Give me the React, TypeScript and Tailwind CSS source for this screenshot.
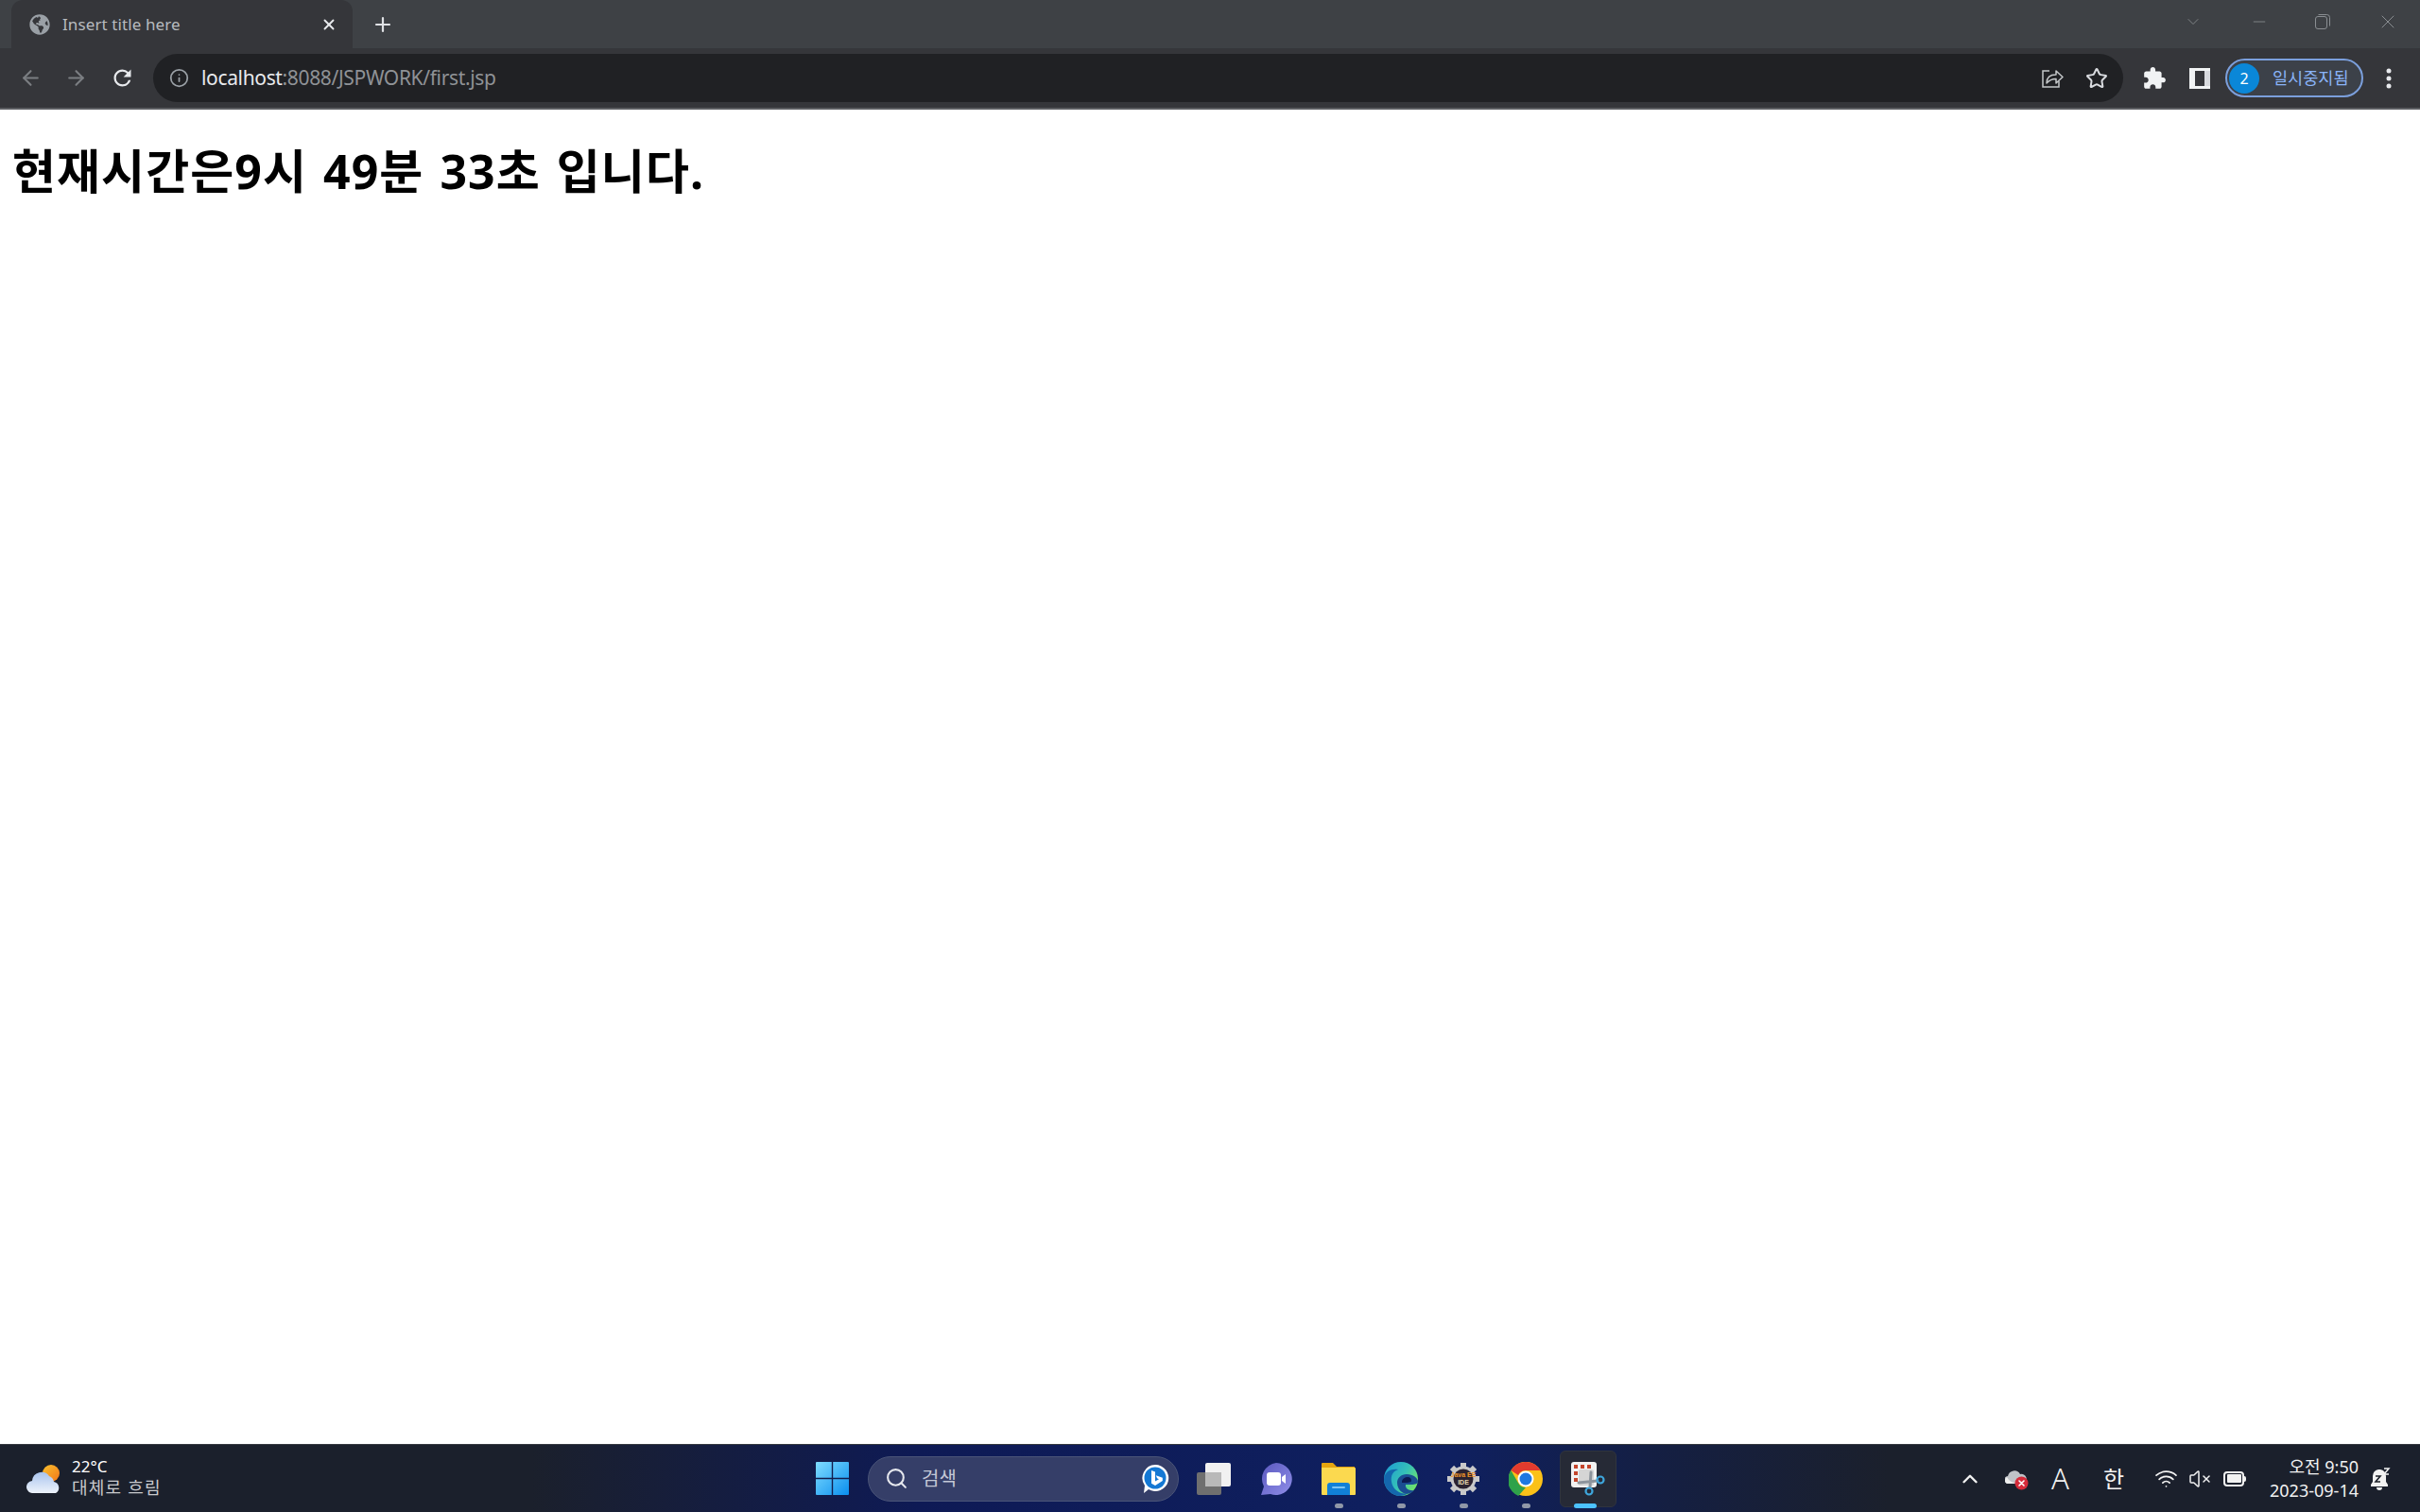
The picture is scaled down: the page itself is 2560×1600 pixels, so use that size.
import type { ReactNode } from 'react';
import { ArrowLeft, ArrowRight, ChevronDown, ChevronUp, Info, Minus, Plus, Search, Star, VolumeX, Wifi, X } from 'lucide-react';
import { FaGlobeAmericas } from 'react-icons/fa';

const KR = 'font-["Noto_Sans","Noto_Sans_CJK_KR",sans-serif]';

function Slot({ children, dot, active }: { children: ReactNode; dot?: boolean; active?: boolean }) {
  return (
    <div className="relative flex h-[60px] w-[66px] items-center justify-center">
      {active && <div className="absolute inset-x-[3px] inset-y-0 rounded-md border border-[#30343e] bg-[#262a36]" />}
      <div className="relative">{children}</div>
      {dot && <div className="absolute bottom-[-1px] left-[29px] h-[5px] w-[9px] rounded-full bg-[#9098a8]" />}
      {active && <div className="absolute bottom-[-1px] left-[18px] h-[5px] w-[24px] rounded-full bg-[#4cc2ff]" />}
    </div>
  );
}

function Weather() {
  return (
    <svg viewBox="0 0 38 30" className="h-[30px] w-[38px]">
      <defs>
        <linearGradient id="sun" x1="0" y1="0" x2="1" y2="1">
          <stop offset="0" stopColor="#fbc12d" />
          <stop offset="1" stopColor="#f0761a" />
        </linearGradient>
        <linearGradient id="cloud" x1="0" y1="0" x2="0" y2="1">
          <stop offset="0" stopColor="#a9c4ee" />
          <stop offset="1" stopColor="#eef3fb" />
        </linearGradient>
      </defs>
      <circle cx="26" cy="9" r="9" fill="url(#sun)" />
      <path d="M7 30a6.500 6.500 0 0 1-1-13 10 10 0 0 1 18-5 8 8 0 0 1 5 6 6.500 6.500 0 0 1 2 12z" fill="url(#cloud)" />
    </svg>
  );
}

function StartLogo() {
  return (
    <svg viewBox="0 0 35 35" className="block h-[35px] w-[35px]">
      <defs>
        <linearGradient id="win" x1="0" y1="0" x2="1" y2="1">
          <stop offset="0" stopColor="#7fdcff" />
          <stop offset="1" stopColor="#0a8fef" />
        </linearGradient>
      </defs>
      <path d="M1 0h15.800v16.800H0V1a1 1 0 0 1 1-1zM18.200 0H34a1 1 0 0 1 1 1v15.800H18.200zM0 18.200h16.800V35H1a1 1 0 0 1-1-1zM18.200 18.200H35V34a1 1 0 0 1-1 1H18.200z" fill="url(#win)" />
    </svg>
  );
}

function BingBubble() {
  return (
    <svg viewBox="0 0 30 32" className="h-[32px] w-[30px]">
      <path d="M15 1a14 14 0 1 1-7 26l-5 4 1-8A14 14 0 0 1 15 1z" fill="#fff" />
      <circle cx="15" cy="15" r="11.500" fill="#1478d4" />
      <path d="M11 7l4 1.500v10l4-2.300-2-1-1.200-3 7 2.500v3.300L15 23l-4-2.300z" fill="#fff" />
    </svg>
  );
}

function TaskView() {
  return (
    <svg viewBox="0 0 36 34" className="block h-[34px] w-[36px]">
      <rect x="9" y="0" width="27" height="25" rx="2" fill="#f1f1f1" />
      <rect x="0" y="10" width="26" height="24" rx="2" fill="#6f6f6f" />
      <rect x="9" y="10" width="17" height="15" fill="#b9b9b9" />
    </svg>
  );
}

function ChatIcon() {
  return (
    <svg viewBox="0 0 34 34" className="block h-[34px] w-[34px]">
      <defs>
        <linearGradient id="chat" x1="0" y1="0" x2="1" y2="1">
          <stop offset="0" stopColor="#5a58bf" />
          <stop offset="1" stopColor="#8f8ee8" />
        </linearGradient>
      </defs>
      <path d="M17 0a17 17 0 1 1-6 33l-10 1 3-9A17 17 0 0 1 17 0z" fill="url(#chat)" />
      <rect x="7" y="10" width="15" height="14" rx="3" fill="#fff" />
      <path d="M23 15l4-3v10l-4-3z" fill="#fff" />
    </svg>
  );
}

function FolderIcon() {
  return (
    <svg viewBox="0 0 36 34" className="block h-[34px] w-[36px]">
      <path d="M1 0h11l4 4h19v8H0V1a1 1 0 0 1 1-1z" fill="#e5a50f" />
      <path d="M0 5h35a1 1 0 0 1 1 1v27a1 1 0 0 1-1 1H1a1 1 0 0 1-1-1z" fill="#fbd94f" />
      <path d="M6 34V24a3 3 0 0 1 3-3h18a3 3 0 0 1 3 3v10z" fill="#1180d8" />
      <rect x="11" y="25" width="14" height="2" rx="1" fill="#7ac4f5" />
    </svg>
  );
}

function EdgeIcon() {
  return (
    <svg viewBox="0 0 36 36" className="block h-[36px] w-[36px]">
      <defs>
        <linearGradient id="edgeTop" x1="0" y1="0" x2="1" y2="0.600">
          <stop offset="0" stopColor="#1a98d5" />
          <stop offset="0.600" stopColor="#35c1b8" />
          <stop offset="1" stopColor="#6fe36b" />
        </linearGradient>
      </defs>
      <circle cx="18" cy="18" r="18" fill="url(#edgeTop)" />
      <path d="M0 18C1 9 9 7 15 8c-6 2-8 7-7 13 1 8 9 14 18 12-3 2-6 3-9 3C8 36 0 28 0 18z" fill="#1467ad" />
      <path d="M14 22c0-5 4-9 10-9 7 0 12 4 12 8 0 2-3 3-7 3h-6c-1 4 4 7 9 6-3 4-9 5-13 2-3-2-5-6-5-10z" fill="#1a4d92" />
      <path d="M19 20c1-2 3-4 6-4 3 0 4 2 4 4 0 2-5 2-10 2z" fill="#0c1a52" />
    </svg>
  );
}

function JavaIdeIcon() {
  const teeth = [0, 45, 90, 135, 180, 225, 270, 315];
  return (
    <div className="relative h-[34px] w-[34px]">
      <svg viewBox="0 0 34 34" className="block h-[34px] w-[34px]">
        {teeth.map((a) => (
          <rect key={a} x="14" y="0" width="6" height="8" fill="#c9c9c9" transform={`rotate(${a} 17 17)`} />
        ))}
        <circle cx="17" cy="17" r="13.500" fill="#c9c9c9" />
        <circle cx="17" cy="17" r="10.500" fill="#2b2230" />
      </svg>
      <div className="absolute inset-0 flex flex-col items-center justify-center font-['Liberation_Sans',sans-serif] text-[7px] leading-[8px] font-bold text-[#f0952a]">
        <span>Java EE</span>
        <span className="text-[#e9d9b0]">IDE</span>
      </div>
    </div>
  );
}

function ChromeIcon() {
  return (
    <svg viewBox="0 0 36 36" className="block h-[36px] w-[36px]">
      <circle cx="18" cy="18" r="18" fill="#fbc118" />
      <path d="M2.400 9A18 18 0 0 1 33.600 9H18a9 9 0 0 0-8 5z" fill="#e33b2e" />
      <path d="M2.400 9L10.200 22.500a9 9 0 0 0 7.800 4.500L10.200 36A18 18 0 0 1 2.400 9z" fill="#2fa24a" />
      <circle cx="18" cy="18" r="8.500" fill="#fff" />
      <circle cx="18" cy="18" r="6.500" fill="#1f78e0" />
    </svg>
  );
}

function SnipIcon() {
  return (
    <svg viewBox="0 0 36 36" className="block h-[36px] w-[36px]">
      <rect x="0" y="0" width="27" height="27" rx="3" fill="#f2f2f2" />
      <path d="M3 3h4v4H3zM10 3h4v4h-4zM17 3h4v4h-4zM3 10h4v4H3zM3 17h4v4H3z" fill="#c4452c" />
      <rect x="8" y="8" width="16" height="17" rx="2" fill="#d5d5d5" />
      <path d="M21 11l-1 16M8 22l20-2" stroke="#8d949c" strokeWidth="3" strokeLinecap="round" />
      <circle cx="31" cy="19" r="3.500" fill="none" stroke="#3ea6dc" strokeWidth="2.200" />
      <circle cx="19" cy="31" r="3.500" fill="none" stroke="#3ea6dc" strokeWidth="2.200" />
    </svg>
  );
}

function TrayCloud() {
  return (
    <div className="relative h-[24px] w-[25px]">
      <svg viewBox="0 0 25 24" className="block h-[24px] w-[25px]">
        <path d="M4 17a4 4 0 0 1-1-8 7 7 0 0 1 13-2 5 5 0 0 1 3 10z" fill="#bfc2c7" />
        <path d="M2 17a4 4 0 0 1 0-7c2 4 6 6 10 7z" fill="#eeeeee" />
        <circle cx="17.500" cy="16.500" r="7" fill="#d52b3a" />
        <path d="M15 14l5 5M20 14l-5 5" stroke="#fff" strokeWidth="1.600" strokeLinecap="round" />
      </svg>
    </div>
  );
}

function BellSnooze() {
  return (
    <svg viewBox="0 0 22 24" className="block h-[24px] w-[22px]">
      <path d="M9 2a7 7 0 0 0-6 7v6l-2 3v2h18v-2l-2-3V9a7 7 0 0 0-6-7z" fill="#f2f2f2" />
      <path d="M7 21a3 3 0 0 0 6 0z" fill="#f2f2f2" />
      <path d="M6 9h5l-5 6h5" fill="none" stroke="#1c2029" strokeWidth="1.600" />
      <path d="M15 1h5l-5 6h5" fill="none" stroke="#f2f2f2" strokeWidth="1.500" />
    </svg>
  );
}

function BrowserChrome() {
  return (
    <header className={`${KR} shrink-0`}>
      <div className="flex h-[51px] items-end bg-[#3e4145] pl-[12px]">
        <div className="flex h-[51px] w-[361px] items-center rounded-t-[12px] bg-[#35363a] pr-[16px] pl-[19px]">
          <FaGlobeAmericas className="h-[22px] w-[22px] text-[#9aa0a6]" />
          <span className="ml-[13px] flex-1 text-[17px] tracking-[0.1px] whitespace-nowrap text-[#b7bbbf]">Insert title here</span>
          <X className="h-[18px] w-[18px] text-[#e8eaed]" strokeWidth={2.5} />
        </div>
        <div className="flex h-[51px] items-center pl-[20px]">
          <Plus className="h-[24px] w-[24px] text-[#e0e2e5]" strokeWidth={2.2} />
        </div>
        <div className="ml-auto flex h-[45px] items-center self-start text-[#8a8e92]">
          <ChevronDown className="h-[20px] w-[20px]" strokeWidth={1} />
          <Minus className="ml-[50px] h-[20px] w-[20px]" strokeWidth={1} />
          <svg viewBox="0 0 18 18" className="ml-[48px] h-[18px] w-[18px]" fill="none" stroke="currentColor" strokeWidth="1">
            <rect x="1.500" y="3.500" width="12" height="13" rx="2.500" />
            <path d="M4.500 1.500h9a3 3 0 0 1 3 3v9" />
          </svg>
          <X className="mr-[22px] ml-[48px] h-[24px] w-[24px]" strokeWidth={1} />
        </div>
      </div>
      <div className="flex h-[65px] items-center border-b-2 border-[#5c5e62] bg-[#35363a]">
        <div className="flex w-[162px] items-center pl-[20px]">
          <ArrowLeft className="h-[25px] w-[25px] text-[#7b7e82]" strokeWidth={2} />
          <ArrowRight className="ml-[23px] h-[25px] w-[25px] text-[#7b7e82]" strokeWidth={2} />
          <svg viewBox="0 0 24 24" className="ml-[23px] h-[27px] w-[27px] text-[#e8eaed]" fill="currentColor">
            <path d="M17.650 6.350A7.958 7.958 0 0 0 12 4c-4.420 0-7.990 3.580-7.990 8s3.570 8 7.990 8c3.730 0 6.840-2.550 7.730-6h-2.080A5.990 5.990 0 0 1 12 18c-3.310 0-6-2.690-6-6s2.690-6 6-6c1.660 0 3.140.69 4.220 1.780L13 11h7V4l-2.350 2.350z" />
          </svg>
        </div>
        <div className="flex h-[51px] w-[2084px] items-center rounded-full bg-[#202124] pr-[16px] pl-[17px]">
          <Info className="h-[21px] w-[21px] text-[#9aa0a6]" strokeWidth={2} />
          <span className="ml-[13px] flex-1 text-[21px] tracking-[-0.35px] whitespace-nowrap text-[#8f9296]">
            <span className="text-[#e8eaed]">localhost</span>:8088/JSPWORK/first.jsp
          </span>
          <svg viewBox="0 0 24 24" className="h-[24px] w-[24px] text-[#c4c7c9]" fill="none" stroke="currentColor" strokeWidth="1.500">
            <path d="M9 4H2v17h17v-6" />
            <path d="M6 17c0-6 4-9 10-9V4l7 6.500-7 6.500v-4.500c-4 0-7 1-10 4.500z" strokeLinejoin="round" />
          </svg>
          <Star className="ml-[23px] h-[24px] w-[24px] text-[#dadce0]" strokeWidth={2} />
        </div>
        <svg viewBox="0 0 24 24" className="ml-[20px] h-[26px] w-[26px] text-[#f1f3f4]" fill="currentColor">
          <path d="M20.500 11H19V7c0-1.100-.9-2-2-2h-4V3.500C13 2.120 11.880 1 10.500 1S8 2.120 8 3.500V5H4c-1.100 0-1.990.9-1.990 2v3.800H3.500c1.490 0 2.700 1.210 2.700 2.700s-1.210 2.700-2.700 2.700H2V20c0 1.100.9 2 2 2h3.800v-1.500c0-1.490 1.210-2.700 2.700-2.700 1.490 0 2.700 1.210 2.700 2.700V22H17c1.100 0 2-.9 2-2v-4h1.500c1.380 0 2.500-1.120 2.500-2.500S21.880 11 20.500 11z" />
        </svg>
        <div className="ml-[24px] flex h-[22px] w-[22px] justify-end bg-[#f1f3f4] p-[3px] pr-0">
          <div className="h-full w-[10px] bg-[#35363a]" />
          <div className="h-full w-[6px] bg-[#d8dade]" />
        </div>
        <div className="ml-[16px] flex h-[41px] w-[146px] items-center rounded-full border-2 border-[#7b9fdc] bg-[#3c4149] pl-[2px]">
          <div className="flex h-[32px] w-[32px] items-center justify-center rounded-full bg-[#0a87d8] text-[16px] text-white">2</div>
          <span className="ml-[14px] text-[17.5px] whitespace-nowrap text-[#8ab4f8]">일시중지됨</span>
        </div>
        <svg viewBox="0 0 6 22" className="ml-[24px] h-[22px] w-[6px] text-[#e8eaed]" fill="currentColor">
          <circle cx="3" cy="3" r="2.500" />
          <circle cx="3" cy="11" r="2.500" />
          <circle cx="3" cy="19" r="2.500" />
        </svg>
      </div>
    </header>
  );
}

function Taskbar() {
  return (
    <footer className={`${KR} flex h-[72px] shrink-0 items-center border-t border-[#34383f] bg-[linear-gradient(90deg,#1b202c_0%,#1b202c_22%,#0e1a55_38%,#0f2060_60%,#141f44_68%,#1b202c_78%,#1b202c_100%)] text-white`}>
      <div className="flex w-[847px] items-center pl-[28px]">
        <Weather />
        <div className="mb-[3px] ml-[10px] flex flex-col">
          <span className="text-[17px] leading-[22px]">22°C</span>
          <span className="text-[18px] leading-[22px] tracking-[1.2px] text-[#c8cacd]">대체로 흐림</span>
        </div>
      </div>
      <Slot>
        <StartLogo />
      </Slot>
      <div className="ml-[5px] flex h-[48px] w-[329px] items-center rounded-full border border-[#4a5478] bg-[#353e68] pr-[9px] pl-[17px]">
        <Search className="h-[25px] w-[25px] text-[#e6e8ee]" strokeWidth={2} />
        <span className="ml-[14px] flex-1 text-[20px] text-[#c4c8d6]">검색</span>
        <BingBubble />
      </div>
      <div className="ml-[4px] flex items-center">
        <Slot>
          <TaskView />
        </Slot>
        <Slot>
          <ChatIcon />
        </Slot>
        <Slot dot>
          <FolderIcon />
        </Slot>
        <Slot dot>
          <EdgeIcon />
        </Slot>
        <Slot dot>
          <JavaIdeIcon />
        </Slot>
        <Slot dot>
          <ChromeIcon />
        </Slot>
        <Slot active>
          <SnipIcon />
        </Slot>
      </div>
      <div className="ml-auto flex items-center pr-[31px]">
        <ChevronUp className="h-[26px] w-[26px] text-[#f2f2f2]" strokeWidth={2.2} />
        <div className="ml-[24px]">
          <TrayCloud />
        </div>
        <span className="ml-[24px] text-[31px] leading-none font-light text-[#f2f2f2]">A</span>
        <span className="ml-[36px] text-[24px] leading-none text-[#f2f2f2]">한</span>
        <Wifi className="ml-[32px] h-[25px] w-[25px] text-[#f2f2f2]" strokeWidth={1.7} />
        <VolumeX className="ml-[11px] h-[24px] w-[24px] text-[#f2f2f2]" strokeWidth={1.5} />
        <div className="ml-[13px] flex items-center">
          <div className="h-[16px] w-[22px] rounded-[4px] border-2 border-[#f2f2f2] p-[1.5px]">
            <div className="h-full w-full rounded-[1px] bg-[#f2f2f2]" />
          </div>
          <div className="h-[6px] w-[2px] rounded-r bg-[#f2f2f2]" />
        </div>
        <div className="ml-[19px] flex w-[100px] flex-col items-end text-[18px] leading-[25px] text-[#f2f2f2]">
          <span>오전 9:50</span>
          <span>2023-09-14</span>
        </div>
        <div className="ml-[12px]">
          <BellSnooze />
        </div>
      </div>
    </footer>
  );
}

export default function App() {
  return (
    <div className="flex h-screen flex-col overflow-hidden bg-white">
      <BrowserChrome />
      <main className="flex-1 px-[13px] pt-[30px]">
        <h1 className={`${KR} text-[50px] leading-[70px] font-bold tracking-[1.05px] [word-spacing:3px] whitespace-pre text-black`}>현재시간은9시 49분 33초 입니다.</h1>
      </main>
      <Taskbar />
    </div>
  );
}
